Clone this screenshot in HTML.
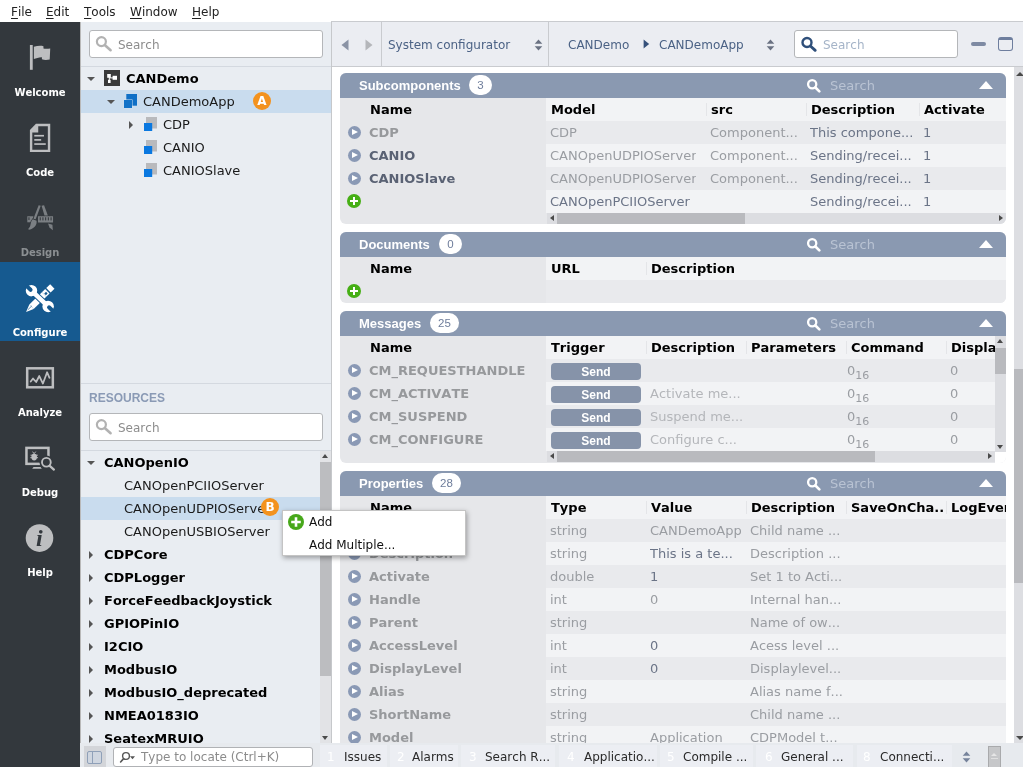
<!DOCTYPE html>
<html>
<head>
<meta charset="utf-8">
<title>CDP Studio</title>
<style>
*{box-sizing:border-box;margin:0;padding:0}
html,body{width:1023px;height:767px;overflow:hidden;background:#fff}
body{font-family:"DejaVu Sans","Liberation Sans",sans-serif;font-size:13px;color:#1a1a1a;position:relative;font-kerning:none}
.abs{position:absolute}
body>*{will-change:transform}
/* menu */
#menu{position:absolute;left:0;top:0;width:1023px;height:22px;background:#fff}
#menu span{position:absolute;top:4px;font-size:12px;line-height:16px;color:#222}
#menu u{text-decoration:underline;text-underline-offset:2px}
/* sidebar */
#side{position:absolute;left:0;top:22px;width:80px;height:745px;background:#33383d}
.sb{position:absolute;left:0;width:80px;height:80px}
.sb b{position:absolute;left:0;width:80px;top:64px;text-align:center;font-size:10px;line-height:14px;color:#fff;font-weight:bold}
.sb svg{position:absolute;left:0;top:0}
.sb.sel{background:#165a90;height:79px}
.sb.dim b{color:#8b8f92}
/* left panel */
#left{position:absolute;left:80px;top:22px;width:251px;height:721px;background:#e9edf2}
.sbox{position:absolute;left:9px;width:234px;height:28px;background:#fff;border:1px solid #b4b6b9;border-radius:3px}
.sbox span{position:absolute;left:28px;top:6px;font-size:12px;line-height:16px;color:#8c8c8c}
.sbox svg{position:absolute;left:5px;top:4px}
.hline{position:absolute;left:0;width:251px;height:1px;background:#d4d9e0}
.tr{position:absolute;left:0;width:251px;height:23px;line-height:23px;font-size:13px;color:#1a1a1a;white-space:nowrap}
.tr.sel{background:#c9dcee}
.tr span{position:absolute;top:0}
.tr .ti{position:absolute}
.tr b{position:absolute;top:0;color:#000}
.arr-d{position:absolute;width:0;height:0;border-left:4px solid transparent;border-right:4px solid transparent;border-top:4px solid #555}
.arr-r{position:absolute;width:0;height:0;border-top:4px solid transparent;border-bottom:4px solid transparent;border-left:4px solid #555}
.badge{position:absolute;width:18px;height:18px;border-radius:50%;background:#f3921e;color:#fff;font-size:12px;font-weight:bold;line-height:18px;text-align:center;font-style:normal;z-index:2}
/* toolbar */
#tool{position:absolute;left:331px;top:21px;width:692px;height:46px;background:#ebedf2;border-bottom:1px solid #c9cbcf;border-left:1px solid #c9cbcf;border-top:1px solid #c9cbcf}
#tool .vs{position:absolute;top:0;width:1px;height:44px;background:#c9cbcf}
#tool .t{position:absolute;top:15px;font-size:12px;line-height:16px;color:#4b6285;white-space:nowrap}
/* main */
#main{position:absolute;left:332px;top:67px;width:681px;height:676px;background:#fff;overflow:hidden}
.sec{position:absolute;left:8px;width:666px;background:#e6e7ea;border-radius:6px;overflow:hidden}
.sh{position:absolute;left:0;top:0;width:666px;height:25px;background:#8a99b1}
.sh .ti{position:absolute;left:19px;top:5px;font-family:"Liberation Sans",sans-serif;font-weight:bold;font-size:13px;line-height:16px;color:#fff}
.sh .ct{position:absolute;top:2px;height:20px;border-radius:10px;background:#fff;color:#6e7d9b;font-family:"Liberation Sans",sans-serif;font-size:11.5px;line-height:21px;text-align:center}
.sh .se{position:absolute;left:490px;top:5px;font-size:13px;line-height:16px;color:#b9c3d3}
.sh .tri{position:absolute;left:639px;top:8px;width:0;height:0;border-left:7px solid transparent;border-right:7px solid transparent;border-bottom:8px solid #fff}
.sh svg{position:absolute;left:467px;top:6px}
.row{position:absolute;left:0;width:666px;height:23px;line-height:23px;font-size:13px;white-space:nowrap;color:#9a9da2}
.row:before{content:"";position:absolute;left:206px;top:0;right:0;height:23px;background:#e9eaed}
.row .bg{position:absolute;left:206px;top:0;right:0;height:23px;background:#f2f3f5}
.row .vl{position:absolute;top:5px;width:1px;height:13px;background:#e4e5e8}
.row span{position:absolute;top:0;overflow:hidden}
.row.h span{font-weight:bold;color:#000}
.row .n{left:29px;font-weight:bold;color:#97999c}
.row .nd{left:29px;font-weight:bold;color:#5a6274}
.row .c1{left:210px}.row .c2{left:310px}.row .c3{left:410px}.row .c4{left:510px}.row .c5{left:610px}
.dk{color:#6b7487}
.pl{position:absolute;left:8px;top:5px;width:13px;height:13px;border-radius:50%;background:#8a99b5}
.pl:after{content:"";position:absolute;left:4.2px;top:2.7px;border-top:3.8px solid transparent;border-bottom:3.8px solid transparent;border-left:6px solid #fff}
.plus{position:absolute;width:14px;height:14px;border-radius:50%;background:#46af15}
.plus:before{content:"";position:absolute;left:3px;top:6px;width:8px;height:2.2px;background:#fff}
.plus:after{content:"";position:absolute;left:5.9px;top:3px;width:2.2px;height:8px;background:#fff}
.send{position:absolute;left:211px;top:4px;width:90px;height:17px;border-radius:4px;background:#8693a9;color:#fff;font-family:"Liberation Sans",sans-serif;font-weight:bold;font-size:12px;line-height:19px;text-align:center}
/* bottom */
#bot{position:absolute;left:80px;top:743px;width:943px;height:24px;background:#e7eaee}
#bot .it{position:absolute;top:2px;height:22px;line-height:25px;font-size:12px;color:#2a2a2a;white-space:nowrap;background:#eceef3}
#bot .it span{position:absolute;top:0}
#bot .it i{position:absolute;top:0;font-style:normal;color:#fff}

.hs{position:absolute;height:11px;background:#dcdde1}
.hs .th{position:absolute;top:0;height:11px;background:#b9babe}
.hs .al{position:absolute;left:3px;top:2px;border-top:3.5px solid transparent;border-bottom:3.5px solid transparent;border-right:4px solid #4a4a4a}
.hs .ar{position:absolute;right:3px;top:2px;border-top:3.5px solid transparent;border-bottom:3.5px solid transparent;border-left:4px solid #4a4a4a}
.vsb{position:absolute;width:11px;background:#dcdde1}
.vsb .th{position:absolute;left:0;width:11px;background:#b9babe}
.vsb .au{position:absolute;left:2px;top:3px;border-left:3.5px solid transparent;border-right:3.5px solid transparent;border-bottom:4px solid #4a4a4a}
.vsb .ad{position:absolute;left:2px;bottom:3px;border-left:3.5px solid transparent;border-right:3.5px solid transparent;border-top:4px solid #4a4a4a}
.lt{color:#b4b6ba}
sub{font-size:11px;vertical-align:baseline;position:relative;top:4px}
/* ctx menu */
#ctx{position:absolute;left:282px;top:510px;width:184px;height:46px;background:#fff;border:1px solid #c4c4c4;box-shadow:1px 2px 5px rgba(0,0,0,.35);z-index:10}
#ctx span{position:absolute;left:26px;font-size:12px;line-height:16px;color:#111}
</style>
</head>
<body>
<div id="menu">
<span style="left:11px"><u>F</u>ile</span>
<span style="left:46px"><u>E</u>dit</span>
<span style="left:84px"><u>T</u>ools</span>
<span style="left:130px"><u>W</u>indow</span>
<span style="left:192px"><u>H</u>elp</span>
</div>

<div id="side">
<div class="sb" style="top:0px"><svg width="80" height="80"><g transform="translate(8 4) scale(0.10428)" fill="#bdbec0"><rect x="210" y="182" width="27" height="238"/><path d="M248 200C280 190 312 186 340 194L340 216C362 222 385 217 405 215L400 322C378 327 350 330 325 320L325 300C300 298 270 310 248 316Z"/></g></svg><b>Welcome</b></div>
<div class="sb" style="top:80px"><svg width="80" height="80"><g transform="translate(8 4) scale(0.10428)"><path d="M268 170L405 170L405 442L210 442L210 230Z" fill="#bdbec0"/><path d="M290 194L382 194L382 420L233 420L233 254L290 254Z" fill="#33383d"/><rect x="252" y="277" width="93" height="16" fill="#bdbec0"/><rect x="252" y="317" width="66" height="16" fill="#bdbec0"/><rect x="252" y="357" width="110" height="16" fill="#bdbec0"/></g></svg><b>Code</b></div>
<div class="sb dim" style="top:160px"><svg width="80" height="80"><g transform="translate(8 4) scale(0.10428)" fill="#7b7f83"><rect x="185" y="290" width="60" height="58"/><rect x="288" y="290" width="144" height="60"/><g fill="#33383d"><rect x="304" y="300" width="10" height="30"/><rect x="330" y="300" width="10" height="30"/><rect x="356" y="300" width="10" height="30"/><rect x="382" y="300" width="10" height="30"/><rect x="408" y="300" width="10" height="30"/><rect x="196" y="300" width="10" height="26"/></g><g stroke="#33383d" stroke-width="14" paint-order="stroke"><path d="M294 184L314 190L264 322L244 314Z"/><path d="M238 318L274 334C278 372 258 408 202 420C192 418 194 408 202 400C224 378 210 346 238 318Z"/></g><path d="M322 190L346 184L382 282L350 282Z"/><path d="M384 360L426 372L430 424L398 398Z"/></g></svg><b>Design</b></div>
<div class="sb sel" style="top:240px"><svg width="80" height="80"><g transform="translate(8 4) scale(0.10428)"><g transform="translate(300 318) rotate(-44)" fill="#fff"><path d="M-176 0L-104 -30L-104 30Z"/><rect x="-104" y="-30" width="168" height="60"/><rect x="64" y="-30" width="44" height="60"/><rect x="72" y="-6" width="24" height="22" fill="#165a90"/><rect x="122" y="-30" width="52" height="60"/><path d="M-150 -3L-96 -3" stroke="#165a90" stroke-width="6"/></g><g transform="translate(305 312) rotate(43.5)"><g fill="#165a90" stroke="#165a90" stroke-width="18"><circle cx="-110" cy="0" r="55"/><circle cx="110" cy="0" r="55"/><rect x="-110" y="-22" width="220" height="44"/></g><g fill="#fff"><circle cx="-110" cy="0" r="55"/><circle cx="110" cy="0" r="55"/><rect x="-110" y="-22" width="220" height="44"/></g><g fill="#165a90"><path d="M-180 -19L-122 -19A19 19 0 0 1 -122 19L-180 19Z"/><path d="M180 -19L122 -19A19 19 0 0 0 122 19L180 19Z"/></g></g></g></svg><b>Configure</b></div>
<div class="sb" style="top:320px"><svg width="80" height="80"><g transform="translate(8 4) scale(0.10428)" fill="none" stroke="#bdbec0"><rect x="184" y="214" width="246" height="182" stroke-width="24"/><polyline points="218,340 240,312 270,345 300,288 335,360 375,252 398,305" stroke-width="17" stroke-linejoin="round" stroke-linecap="round"/></g></svg><b>Analyze</b></div>
<div class="sb" style="top:400px"><svg width="80" height="80"><g transform="translate(8 4) scale(0.10428)"><rect x="177" y="210" width="211" height="153" fill="none" stroke="#bdbec0" stroke-width="24"/><path d="M245 394L312 394L324 410L232 410Z" fill="#bdbec0"/><circle cx="368" cy="348" r="66" fill="#33383d"/><circle cx="368" cy="348" r="42" fill="none" stroke="#bdbec0" stroke-width="18"/><path d="M400 382L440 418" stroke="#bdbec0" stroke-width="22" stroke-linecap="round"/><ellipse cx="251" cy="298" rx="27" ry="33" fill="#bdbec0"/><path d="M236 246L250 266L266 246M216 280L286 280M214 304L288 304" stroke="#bdbec0" stroke-width="9" fill="none"/></g></svg><b>Debug</b></div>
<div class="sb" style="top:480px"><svg width="80" height="80"><circle cx="39.5" cy="36.1" r="13.8" fill="#bdbec0"/><text x="39.3" y="44" text-anchor="middle" font-family="Liberation Serif,DejaVu Serif,serif" font-style="italic" font-weight="bold" font-size="24" fill="#33383d">i</text></svg><b>Help</b></div>
</div>

<div id="left">
<div class="sbox" style="top:8px"><svg width="18" height="18" viewBox="0 0 18 18"><circle cx="6.4" cy="6.6" r="4.5" fill="none" stroke="#b2b2b2" stroke-width="2.2"/><path d="M10 10.2L15.6 15.2" stroke="#b2b2b2" stroke-width="2.6" stroke-linecap="round"/></svg><span>Search</span></div>
<div class="hline" style="top:44px"></div>
<div class="tr" style="top:45px"><i class="arr-d" style="left:7px;top:10px"></i><svg class="ti" style="left:24px;top:3px" width="16" height="16"><rect width="16" height="16" fill="#3a3a3a"/><rect x="3.2" y="4" width="3.6" height="3.8" fill="#fff"/><rect x="8.6" y="5.8" width="4.4" height="4" fill="#fff"/><rect x="4" y="9.8" width="2.6" height="3.2" fill="#fff"/><path d="M5.3 7L5.3 11M5.3 7.9L9 7.9" stroke="#fff" stroke-width="1" fill="none"/></svg><b style="left:46px">CANDemo</b></div>
<div class="tr sel" style="top:68px"><i class="arr-d" style="left:27px;top:10px"></i><svg class="ti" style="left:43px;top:3px" width="16" height="16"><rect x="3.3" y="1" width="10.7" height="11.7" fill="#0f6fc6"/><rect x="0.5" y="6.5" width="9" height="9" fill="#d0e0f0"/><rect x="1" y="7" width="8" height="8" fill="#1272c8"/></svg><span style="left:63px">CANDemoApp</span><i class="badge" style="left:173px;top:2px">A</i></div>
<div class="tr" style="top:91px"><i class="arr-r" style="left:49px;top:8px"></i><svg class="ti" style="left:63px;top:3px" width="16" height="16"><rect x="3" y="1" width="11" height="11.5" fill="#b9babd"/><rect x="1" y="7" width="8.2" height="8" fill="#0a78e0"/></svg><span style="left:83px">CDP</span></div>
<div class="tr" style="top:114px"><svg class="ti" style="left:63px;top:3px" width="16" height="16"><rect x="3" y="1" width="11" height="11.5" fill="#b9babd"/><rect x="1" y="7" width="8.2" height="8" fill="#0a78e0"/></svg><span style="left:83px">CANIO</span></div>
<div class="tr" style="top:137px"><svg class="ti" style="left:63px;top:3px" width="16" height="16"><rect x="3" y="1" width="11" height="11.5" fill="#b9babd"/><rect x="1" y="7" width="8.2" height="8" fill="#0a78e0"/></svg><span style="left:83px">CANIOSlave</span></div>

<div class="hline" style="top:361px"></div>
<div class="abs" style="left:9px;top:368px;font-family:'Liberation Sans',sans-serif;font-weight:bold;font-size:12px;line-height:16px;color:#8a9ab5">RESOURCES</div>
<div class="sbox" style="top:391px"><svg width="18" height="18" viewBox="0 0 18 18"><circle cx="6.4" cy="6.6" r="4.5" fill="none" stroke="#b2b2b2" stroke-width="2.2"/><path d="M10 10.2L15.6 15.2" stroke="#b2b2b2" stroke-width="2.6" stroke-linecap="round"/></svg><span>Search</span></div>
<div class="hline" style="top:428px"></div>
<div class="tr" style="top:429px"><i class="arr-d" style="left:7px;top:10px"></i><b style="left:24px">CANOpenIO</b></div>
<div class="tr" style="top:452px"><span style="left:44px">CANOpenPCIIOServer</span></div>
<div class="tr sel" style="top:475px;width:240px"><span style="left:44px">CANOpenUDPIOServer</span><i class="badge" style="left:181px;top:1px">B</i></div>
<div class="tr" style="top:498px"><span style="left:44px">CANOpenUSBIOServer</span></div>
<div class="tr" style="top:521px"><i class="arr-r" style="left:9px;top:8px"></i><b style="left:24px">CDPCore</b></div>
<div class="tr" style="top:544px"><i class="arr-r" style="left:9px;top:8px"></i><b style="left:24px">CDPLogger</b></div>
<div class="tr" style="top:567px"><i class="arr-r" style="left:9px;top:8px"></i><b style="left:24px">ForceFeedbackJoystick</b></div>
<div class="tr" style="top:590px"><i class="arr-r" style="left:9px;top:8px"></i><b style="left:24px">GPIOPinIO</b></div>
<div class="tr" style="top:613px"><i class="arr-r" style="left:9px;top:8px"></i><b style="left:24px">I2CIO</b></div>
<div class="tr" style="top:636px"><i class="arr-r" style="left:9px;top:8px"></i><b style="left:24px">ModbusIO</b></div>
<div class="tr" style="top:659px"><i class="arr-r" style="left:9px;top:8px"></i><b style="left:24px">ModbusIO_deprecated</b></div>
<div class="tr" style="top:682px"><i class="arr-r" style="left:9px;top:8px"></i><b style="left:24px">NMEA0183IO</b></div>
<div class="tr" style="top:705px;height:16px;overflow:hidden"><i class="arr-r" style="left:9px;top:8px"></i><b style="left:24px">SeatexMRUIO</b></div>
<div class="vsb" style="left:240px;top:429px;width:11px;height:292px;background:#e2e3e6"><i class="au"></i><i class="th" style="top:11px;height:214px;background:#bcbdc0"></i><i class="ad"></i></div>
</div>

<div class="abs" style="left:80px;top:22px;width:1px;height:721px;background:#b9b9b9;z-index:3"></div>
<div class="abs" style="left:331px;top:22px;width:1px;height:721px;background:#c6c8cb;z-index:3"></div>
<div id="tool">
<div class="vs" style="left:49px"></div>
<div class="vs" style="left:216px"></div>
<svg class="abs" style="left:9px;top:17px" width="34" height="12"><path d="M0.5 6L7.5 0.5L7.5 11.5Z" fill="#8a93a5"/><path d="M31.5 6L24.5 0.5L24.5 11.5Z" fill="#b4b6ba"/></svg>
<span class="t" style="left:56px">System configurator</span>
<svg class="abs ud" style="left:202px;top:17px" width="9" height="12"><path d="M4.5 0.5L8.3 4.8L0.7 4.8Z M4.5 11.5L8.3 7.2L0.7 7.2Z" fill="#6a7182"/></svg>
<span class="t" style="left:236px">CANDemo</span>
<svg class="abs" style="left:311px;top:17px" width="7" height="10"><path d="M0.6 0.6L6.2 5L0.6 9.4Z" fill="#35507a"/></svg>
<span class="t" style="left:327px">CANDemoApp</span>
<svg class="abs ud" style="left:434px;top:17px" width="9" height="12"><path d="M4.5 0.5L8.3 4.8L0.7 4.8Z M4.5 11.5L8.3 7.2L0.7 7.2Z" fill="#6a7182"/></svg>
<div class="abs" style="left:462px;top:8px;width:164px;height:28px;background:#fff;border:1px solid #b4b6b9;border-radius:3px"><svg class="abs" style="left:5px;top:5px" width="18" height="18"><circle cx="7" cy="6.5" r="4.5" fill="none" stroke="#2f4f7a" stroke-width="2.4"/><path d="M10.4 10L15.2 14.3" stroke="#2f4f7a" stroke-width="2.9" stroke-linecap="round"/></svg><span class="abs" style="left:28px;top:6px;font-size:12px;line-height:16px;color:#a5b4c8">Search</span></div>
<div class="abs" style="left:639px;top:20px;width:15px;height:4px;border-radius:2px;background:#7e8aa3"></div>
<div class="abs" style="left:666px;top:15px;width:15px;height:14px;border:1.5px solid #6e7e9e;border-top-width:3.5px;border-radius:3px"></div>
</div>

<div id="main">
<!-- SECTIONS -->
<div class="sec" style="top:6px;height:151px"><div class="sh"><span class="ti">Subcomponents</span><span class="ct" style="left:129px;width:23px">3</span><svg width="14" height="14" viewBox="0 0 14 14"><circle cx="5.2" cy="5.3" r="4.1" fill="none" stroke="#fff" stroke-width="2.3"/><path d="M8.4 8.5L12.3 12.4" stroke="#fff" stroke-width="2.6" stroke-linecap="round"/></svg><span class="se">Search</span><i class="tri"></i></div><div class="row h" style="top:25px"><i class="bg"></i><span style="left:30px">Name</span><span style="left:211px">Model</span><span style="left:371px">src</span><span style="left:471px">Description</span><span style="left:584px">Activate</span><i class="vl" style="left:366px"></i><i class="vl" style="left:466px"></i><i class="vl" style="left:579px"></i></div><div class="row" style="top:48px"><i class="pl"></i><span class="n">CDP</span><span class="" style="left:210px">CDP</span><span style="left:370px">Component...</span><span class="dk" style="left:470px">This compone...</span><span class="dk" style="left:583px">1</span></div><div class="row" style="top:71px"><i class="bg"></i><i class="pl"></i><span class="nd">CANIO</span><span class="" style="left:210px">CANOpenUDPIOServer</span><span style="left:370px">Component...</span><span class="dk" style="left:470px">Sending/recei...</span><span class="dk" style="left:583px">1</span></div><div class="row" style="top:94px"><i class="pl"></i><span class="nd">CANIOSlave</span><span class="" style="left:210px">CANOpenUDPIOServer</span><span style="left:370px">Component...</span><span class="dk" style="left:470px">Sending/recei...</span><span class="dk" style="left:583px">1</span></div><div class="row" style="top:117px"><i class="bg"></i><i class="plus" style="left:7px;top:4px"></i><span class="dk" style="left:210px">CANOpenPCIIOServer</span><span class="dk" style="left:470px">Sending/recei...</span><span class="dk" style="left:583px">1</span></div><div class="hs" style="left:207px;top:140px;width:459px"><i class="al"></i><i class="th" style="left:10px;width:188px"></i><i class="ar"></i></div></div>
<div class="sec" style="top:165px;height:71px"><div class="sh"><span class="ti">Documents</span><span class="ct" style="left:99px;width:23px">0</span><svg width="14" height="14" viewBox="0 0 14 14"><circle cx="5.2" cy="5.3" r="4.1" fill="none" stroke="#fff" stroke-width="2.3"/><path d="M8.4 8.5L12.3 12.4" stroke="#fff" stroke-width="2.6" stroke-linecap="round"/></svg><span class="se">Search</span><i class="tri"></i></div><div class="row h" style="top:25px"><i class="bg"></i><span style="left:30px">Name</span><span style="left:211px">URL</span><span style="left:311px">Description</span><i class="vl" style="left:306px"></i></div><div class="row" style="top:48px"><i class="plus" style="left:7px;top:4px"></i></div></div>
<div class="sec" style="top:244px;height:152px"><div class="sh"><span class="ti">Messages</span><span class="ct" style="left:90px;width:29px">25</span><svg width="14" height="14" viewBox="0 0 14 14"><circle cx="5.2" cy="5.3" r="4.1" fill="none" stroke="#fff" stroke-width="2.3"/><path d="M8.4 8.5L12.3 12.4" stroke="#fff" stroke-width="2.6" stroke-linecap="round"/></svg><span class="se">Search</span><i class="tri"></i></div><div class="row h" style="top:25px"><i class="bg"></i><span style="left:30px">Name</span><span style="left:211px">Trigger</span><span style="left:311px">Description</span><span style="left:411px">Parameters</span><span style="left:511px">Command</span><span style="left:611px">Displa</span><i class="vl" style="left:306px"></i><i class="vl" style="left:406px"></i><i class="vl" style="left:506px"></i><i class="vl" style="left:606px"></i></div><div class="row" style="top:48px"><i class="pl"></i><span class="n">CM_REQUESTHANDLE</span><b class="send">Send</b><span class="c4" style="left:507px">0<sub>16</sub></span><span class="c5">0</span></div><div class="row" style="top:71px"><i class="bg"></i><i class="pl"></i><span class="n">CM_ACTIVATE</span><b class="send">Send</b><span class="lt c2">Activate me...</span><span class="c4" style="left:507px">0<sub>16</sub></span><span class="c5">0</span></div><div class="row" style="top:94px"><i class="pl"></i><span class="n">CM_SUSPEND</span><b class="send">Send</b><span class="lt c2">Suspend me...</span><span class="c4" style="left:507px">0<sub>16</sub></span><span class="c5">0</span></div><div class="row" style="top:117px"><i class="bg"></i><i class="pl"></i><span class="n">CM_CONFIGURE</span><b class="send">Send</b><span class="lt c2">Configure c...</span><span class="c4" style="left:507px">0<sub>16</sub></span><span class="c5">0</span></div><div class="hs" style="left:207px;top:140px;width:448px"><i class="al"></i><i class="th" style="left:10px;width:318px"></i><i class="ar"></i></div><div class="vsb" style="left:655px;top:25px;height:116px"><i class="au"></i><i class="th" style="top:12px;height:26px"></i><i class="ad"></i></div><i class="abs" style="left:655px;top:141px;width:11px;height:11px;background:#fff"></i></div>
<div class="sec" style="top:404px;height:300px;border-radius:6px 6px 0 0"><div class="sh"><span class="ti">Properties</span><span class="ct" style="left:92px;width:29px">28</span><svg width="14" height="14" viewBox="0 0 14 14"><circle cx="5.2" cy="5.3" r="4.1" fill="none" stroke="#fff" stroke-width="2.3"/><path d="M8.4 8.5L12.3 12.4" stroke="#fff" stroke-width="2.6" stroke-linecap="round"/></svg><span class="se">Search</span><i class="tri"></i></div><div class="row h" style="top:25px"><i class="bg"></i><span style="left:30px">Name</span><span style="left:211px">Type</span><span style="left:311px">Value</span><span style="left:411px">Description</span><span style="left:511px">SaveOnCha..</span><span style="left:611px">LogEver</span><i class="vl" style="left:306px"></i><i class="vl" style="left:406px"></i><i class="vl" style="left:506px"></i><i class="vl" style="left:606px"></i></div><div class="row" style="top:48px"><i class="pl"></i><span class="n">Name</span><span class="c1">string</span><span class="c2">CANDemoApp</span><span class="c3">Child name ...</span></div><div class="row" style="top:71px"><i class="bg"></i><i class="pl"></i><span class="n">Description</span><span class="c1">string</span><span class="c2 dk">This is a te...</span><span class="c3">Description ...</span></div><div class="row" style="top:94px"><i class="pl"></i><span class="n">Activate</span><span class="c1">double</span><span class="c2 dk">1</span><span class="c3">Set 1 to Acti...</span></div><div class="row" style="top:117px"><i class="bg"></i><i class="pl"></i><span class="n">Handle</span><span class="c1">int</span><span class="c2">0</span><span class="c3">Internal han...</span></div><div class="row" style="top:140px"><i class="pl"></i><span class="n">Parent</span><span class="c1">string</span><span class="c3">Name of ow...</span></div><div class="row" style="top:163px"><i class="bg"></i><i class="pl"></i><span class="n">AccessLevel</span><span class="c1">int</span><span class="c2 dk">0</span><span class="c3">Acess level ...</span></div><div class="row" style="top:186px"><i class="pl"></i><span class="n">DisplayLevel</span><span class="c1">int</span><span class="c2 dk">0</span><span class="c3">Displaylevel...</span></div><div class="row" style="top:209px"><i class="bg"></i><i class="pl"></i><span class="n">Alias</span><span class="c1">string</span><span class="c3">Alias name f...</span></div><div class="row" style="top:232px"><i class="pl"></i><span class="n">ShortName</span><span class="c1">string</span><span class="c3">Child name ...</span></div><div class="row" style="top:255px"><i class="bg"></i><i class="pl"></i><span class="n">Model</span><span class="c1">string</span><span class="c2">Application</span><span class="c3">CDPModel t...</span></div></div>
<!-- /SECTIONS -->
</div>

<div class="vsb" style="left:1014px;top:67px;width:9px;height:676px;background:#dddee2"><i class="au" style="left:1.5px;top:5px;border-left-width:4px;border-right-width:4px"></i><i class="th" style="top:302px;height:214px;width:9px;background:#b9babe"></i><i class="ad" style="left:1.5px;bottom:3px;border-left-width:4px;border-right-width:4px"></i></div>
<div id="bot">
<div class="abs" style="left:4px;top:3px;width:22px;height:21px;background:#d3d5d9"></div>
<div class="abs" style="left:7px;top:8px;width:15px;height:13px;border:1.5px solid #8fa0b8;border-radius:2px;background:#cfd6e0"></div>
<div class="abs" style="left:11.5px;top:9px;width:1.5px;height:11px;background:#8fa0b8"></div>
<div class="abs" style="left:33px;top:4px;width:200px;height:20px;background:#fff;border:1px solid #b0b2b5;border-radius:3px"><svg class="abs" style="left:5px;top:3px" width="18" height="13"><circle cx="7" cy="5" r="3.4" fill="none" stroke="#555" stroke-width="1.4"/><path d="M4.6 7.6L1.6 11" stroke="#555" stroke-width="1.6" stroke-linecap="round"/><path d="M11 5.2L16 5.2L13.5 8.2Z" fill="#555"/></svg><span class="abs" style="left:27px;top:1px;font-size:12px;line-height:16px;color:#8c8c8c;white-space:nowrap">Type to locate (Ctrl+K)</span></div>
<div class="it" style="left:240px;width:67px"><i style="left:7px">1</i><span style="left:24px">Issues</span></div>
<div class="it" style="left:310px;width:68px"><i style="left:7px">2</i><span style="left:22px">Alarms</span></div>
<div class="it" style="left:381px;width:94px"><i style="left:8px">3</i><span style="left:24px">Search R...</span></div>
<div class="it" style="left:479px;width:98px"><i style="left:8px">4</i><span style="left:25px">Applicatio...</span></div>
<div class="it" style="left:580px;width:93px"><i style="left:7px">5</i><span style="left:23px">Compile ...</span></div>
<div class="it" style="left:676px;width:97px"><i style="left:9px">6</i><span style="left:25px">General ...</span></div>
<div class="it" style="left:777px;width:95px"><i style="left:6px">8</i><span style="left:23px">Connecti...</span></div>
<svg class="abs" style="left:882px;top:8px" width="9" height="12"><path d="M4.5 0.5L8.3 4.8L0.7 4.8Z M4.5 11.5L8.3 7.2L0.7 7.2Z" fill="#76839b"/></svg>
<div class="abs" style="left:908px;top:3px;width:13px;height:21px;background:#c6c7c9;border:1px solid #a9aaac;border-bottom:0"><i class="abs" style="left:2px;top:6px;border-left:3.5px solid transparent;border-right:3.5px solid transparent;border-bottom:3.5px solid #e6e6e6"></i><i class="abs" style="left:2px;top:10.5px;width:7px;height:1px;background:#e0e0e0"></i></div>
</div>

<div id="ctx"><svg class="abs" style="left:5px;top:3px" width="16" height="16"><circle cx="8" cy="8" r="8" fill="#47a81a"/><path d="M8 3.2V12.8M3.2 8H12.8" stroke="#fff" stroke-width="2.6"/></svg><span style="top:3px">Add</span><span style="top:26px">Add Multiple...</span></div>
</body>
</html>
